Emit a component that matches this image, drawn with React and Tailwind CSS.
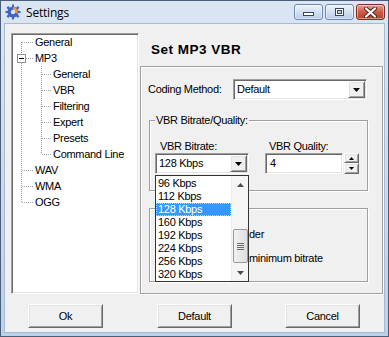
import React from 'react';

const sunken = 'border border-t-[#a0a0a0] border-l-[#a0a0a0] border-b-white border-r-white shadow-[inset_1px_1px_0_#696969,inset_-1px_-1px_0_#e3e3e3]';
const raised = 'border border-t-white border-l-white border-b-[#696969] border-r-[#696969] shadow-[inset_1px_1px_0_#e3e3e3,inset_-1px_-1px_0_#a0a0a0] bg-[#f0f0f0]';
const etched = 'border border-[#a0a0a0] shadow-[inset_1px_1px_0_#fff,1px_1px_0_#fff]';

const tree = [
    { label: 'General', level: 0 },
    { label: 'MP3', level: 0 },
    { label: 'General', level: 1 },
    { label: 'VBR', level: 1 },
    { label: 'Filtering', level: 1 },
    { label: 'Expert', level: 1 },
    { label: 'Presets', level: 1 },
    { label: 'Command Line', level: 1 },
    { label: 'WAV', level: 0 },
    { label: 'WMA', level: 0 },
    { label: 'OGG', level: 0 }
];

const bitrates = ['96 Kbps', '112 Kbps', '128 Kbps', '160 Kbps', '192 Kbps', '224 Kbps', '256 Kbps', '320 Kbps'];

const DownArrow = () => (
    <svg width="7" height="4" viewBox="0 0 7 4"><path d="M0 0h7L3.5 4z" fill="#000" /></svg>
);

const TreeLines = () => (
    <svg className="absolute left-0 top-0" width="120" height="180" shapeRendering="crispEdges">
        <g stroke="#a0a0a0" strokeDasharray="1 1" fill="none">
            <path d="M9.5 8V20M9.5 29V168" />
            <path d="M10 8.5H21M14 24.5H21M10 136.5H21M10 152.5H21M10 168.5H21" />
            <path d="M29.5 32V120" />
            <path d="M30 40.5H39M30 56.5H39M30 72.5H39M30 88.5H39M30 104.5H39M30 120.5H39" />
        </g>
        <rect x="5.5" y="20.5" width="8" height="8" fill="#fff" stroke="#919191" />
        <path d="M7 24.5H12" stroke="#000" />
    </svg>
);

const TitleIcon = () => (
    <svg width="16" height="16" viewBox="0 0 16 16">
        <g fill="#3f63c9">
            <circle cx="8" cy="8" r="5.6" />
            <rect x="7" y="0.5" width="2" height="3" />
            <rect x="7" y="12.5" width="2" height="3" />
            <rect x="0.5" y="7" width="3" height="2" />
            <rect x="12.5" y="7" width="3" height="2" />
            <rect x="2" y="2.5" width="2.4" height="2.4" transform="rotate(45 3.2 3.7)" />
            <rect x="11.6" y="11.1" width="2.4" height="2.4" transform="rotate(45 12.8 12.3)" />
            <rect x="11.6" y="2.5" width="2.4" height="2.4" transform="rotate(45 12.8 3.7)" />
            <rect x="2" y="11.1" width="2.4" height="2.4" transform="rotate(45 3.2 12.3)" />
        </g>
        <path d="M8 8L8 3A5 5 0 0 1 12.6 9.8z" fill="#f29a2e" />
        <circle cx="8" cy="8" r="2.2" fill="#dbe6ff" />
    </svg>
);

const CaptionButton = ({ children, close }) => (
    <div className={`w-[29px] h-[16px] rounded-[3px] border flex items-center justify-center ${close ? 'border-[#7a2e24] bg-gradient-to-b from-[#e3a093] via-[#cc5a45] to-[#b8412c]' : 'border-[#7088ab] bg-gradient-to-b from-[#eef3fa] via-[#d3e0f1] to-[#b9cde8]'} shadow-[inset_0_0_0_1px_rgba(255,255,255,0.45)]`}>
        {children}
    </div>
);

export default function App() {
    return (
        <div className="w-[389px] h-[337px] border border-[#4d5f78] bg-gradient-to-b from-[#dbe6f4] to-[#bcd1ea] flex flex-col font-['Liberation_Sans',Arial,sans-serif] text-[11px] leading-[13px] text-black tracking-[-0.3px] select-none">
            {/* title bar */}
            <div className="h-[22px] shrink-0 flex items-center pl-[4px] pr-[3px]">
                <TitleIcon />
                <span className="ml-[5px] font-['Open_Sans',sans-serif] text-[12px] tracking-[-0.2px] text-black">Settings</span>
                <div className="ml-auto flex gap-[2px]">
                    <CaptionButton>
                        <div className="mt-[4px] w-[11px] h-[4px] bg-white border border-[#34465f]" />
                    </CaptionButton>
                    <CaptionButton>
                        <div className="w-[9px] h-[8px] bg-white border border-[#34465f] flex items-center justify-center">
                            <div className="w-[5px] h-[4px] border border-[#34465f] bg-[#c9d6e8]" />
                        </div>
                    </CaptionButton>
                    <CaptionButton close>
                        <svg width="13" height="11" viewBox="0 0 13 11">
                            <path d="M2 1.5L11 9.5M11 1.5L2 9.5" stroke="#5a1d15" strokeWidth="4" strokeLinecap="round" />
                            <path d="M2 1.5L11 9.5M11 1.5L2 9.5" stroke="#fff" strokeWidth="2.2" strokeLinecap="round" />
                        </svg>
                    </CaptionButton>
                </div>
            </div>

            <div className="flex-1 px-[3px] pb-[3px]">
                <div className="h-full border border-[#a7bad4] bg-[#f0f0f0] flex flex-col">
                    <div className="flex pl-[6px] pt-[9px] items-end gap-[1px]">
                        {/* tree */}
                        <div className={`w-[128px] h-[261px] bg-white ${sunken}`}>
                            <div className="relative">
                                <TreeLines />
                                {tree.map((item, i) => (
                                    <div key={i} className={`relative h-[16px] flex items-center whitespace-nowrap ${item.level ? 'pl-[41px]' : 'pl-[23px]'}`}>
                                        {item.label}
                                    </div>
                                ))}
                            </div>
                        </div>

                        {/* right side */}
                        <div className="w-[243px] flex flex-col">
                            <div className="h-[33px] flex items-center pl-[11px] font-bold text-[13.5px] tracking-[0.5px]">Set MP3 VBR</div>
                            <div className={`h-[228px] ${etched} pl-[7px] pt-[12px]`}>
                                <div className="flex items-center h-[21px]">
                                    <span className="w-[85px]">Coding Method:</span>
                                    <div className={`flex w-[134px] h-[21px] bg-white p-[1px] ${sunken}`}>
                                        <span className="flex-1 pl-[2px] flex items-center">Default</span>
                                        <div className={`w-[17px] h-full flex items-center justify-center ${raised}`}><DownArrow /></div>
                                    </div>
                                </div>

                                {/* group 1 */}
                                <div className={`ml-[1px] mt-[20px] w-[219px] h-[71px] ${etched} flex flex-col`}>
                                    <span className="self-start -mt-[7px] ml-[5px] px-[1px] bg-[#f0f0f0]">VBR Bitrate/Quality:</span>
                                    <div className="flex pl-[5px] mt-[13px] gap-[16px]">
                                        <div className="w-[94px] flex flex-col">
                                            <span className="ml-[5px]">VBR Bitrate:</span>
                                            <div className="relative">
                                                <div className={`flex w-[94px] h-[21px] bg-white p-[1px] ${sunken}`}>
                                                    <span className="flex-1 pl-[2px] flex items-center">128 Kbps</span>
                                                    <div className={`w-[17px] h-full flex items-center justify-center ${raised}`}><DownArrow /></div>
                                                </div>
                                                {/* open drop list */}
                                                <div className="absolute left-0 top-full mt-[1px] z-10 w-[94px] h-[107px] bg-white border border-[#333] flex">
                                                    <div className="w-[75px] pt-[1px]">
                                                        {bitrates.map((b) => (
                                                            <div key={b} className={`h-[13px] pl-[2px] flex items-center ${b === '128 Kbps' ? 'bg-[#3399ff] text-white outline-1 outline-dotted outline-offset-[-1px] outline-[#f3c877]' : ''}`}>{b}</div>
                                                        ))}
                                                    </div>
                                                    <div className="w-[17px] bg-[#f5f5f5] border-l border-[#ececec] flex flex-col items-center">
                                                        <div className="h-[17px] flex items-center justify-center">
                                                            <svg width="7" height="4" viewBox="0 0 7 4"><path d="M3.5 0L7 4H0z" fill="#4d4d4d" /></svg>
                                                        </div>
                                                        <div className="mt-[36px] w-[15px] h-[34px] rounded-[2px] border border-[#9a9a9a] bg-gradient-to-r from-[#f2f2f2] to-[#dedede] flex flex-col items-center justify-center gap-[1px]">
                                                            <div className="w-[7px] h-px bg-[#6a6a6a]" />
                                                            <div className="w-[7px] h-px bg-[#6a6a6a]" />
                                                            <div className="w-[7px] h-px bg-[#6a6a6a]" />
                                                            <div className="w-[7px] h-px bg-[#6a6a6a]" />
                                                        </div>
                                                        <div className="mt-auto h-[17px] flex items-center justify-center">
                                                            <svg width="7" height="4" viewBox="0 0 7 4"><path d="M0 0h7L3.5 4z" fill="#4d4d4d" /></svg>
                                                        </div>
                                                    </div>
                                                </div>
                                            </div>
                                        </div>
                                        <div className="flex flex-col">
                                            <span className="ml-[4px]">VBR Quality:</span>
                                            <div className="flex gap-[1px]">
                                                <div className={`w-[78px] h-[21px] bg-white pl-[4px] flex items-center ${sunken}`}>4</div>
                                                <div className="w-[15px] flex flex-col">
                                                    <div className={`h-[10px] flex items-center justify-center ${raised}`}>
                                                        <svg width="5" height="3" viewBox="0 0 5 3"><path d="M2.5 0L5 3H0z" fill="#000" /></svg>
                                                    </div>
                                                    <div className={`h-[11px] flex items-center justify-center ${raised}`}>
                                                        <svg width="5" height="3" viewBox="0 0 5 3"><path d="M0 0h5L2.5 3z" fill="#000" /></svg>
                                                    </div>
                                                </div>
                                            </div>
                                        </div>
                                    </div>
                                </div>

                                {/* group 2 (mostly hidden behind the open list) */}
                                <div className={`ml-[1px] mt-[17px] w-[219px] h-[74px] ${etched} flex flex-col pl-[99px]`}>
                                    <span className="mt-[19px] h-[13px] whitespace-nowrap">der</span>
                                    <span className="mt-[11px] h-[13px] whitespace-nowrap">minimum bitrate</span>
                                </div>
                            </div>
                        </div>
                    </div>

                    {/* buttons */}
                    <div className="flex pl-[23px] mt-[10px]">
                        <button className={`w-[75px] h-[24px] ${raised}`}>Ok</button>
                        <button className={`ml-[54px] w-[75px] h-[24px] ${raised}`}>Default</button>
                        <button className={`ml-[53px] w-[75px] h-[24px] ${raised}`}>Cancel</button>
                    </div>
                </div>
            </div>
        </div>
    );
}
